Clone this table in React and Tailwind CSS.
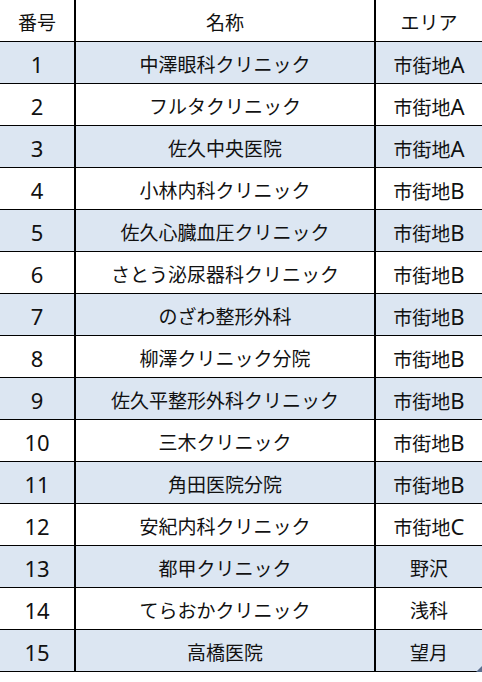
import React from 'react';

const rows = [
  ['1', '中澤眼科クリニック', '市街地A'],
  ['2', 'フルタクリニック', '市街地A'],
  ['3', '佐久中央医院', '市街地A'],
  ['4', '小林内科クリニック', '市街地B'],
  ['5', '佐久心臓血圧クリニック', '市街地B'],
  ['6', 'さとう泌尿器科クリニック', '市街地B'],
  ['7', 'のざわ整形外科', '市街地B'],
  ['8', '柳澤クリニック分院', '市街地B'],
  ['9', '佐久平整形外科クリニック', '市街地B'],
  ['10', '三木クリニック', '市街地B'],
  ['11', '角田医院分院', '市街地B'],
  ['12', '安紀内科クリニック', '市街地C'],
  ['13', '都甲クリニック', '野沢'],
  ['14', 'てらおかクリニック', '浅科'],
  ['15', '高橋医院', '望月'],
];

// Latin letters and digits are drawn larger than the kana/kanji, as in the sheet
function Text({ value }) {
  const parts = value.match(/[A-Za-z0-9]+|[^A-Za-z0-9]+/g) || [];
  return (
    <span>
      {parts.map((p, i) =>
        /[A-Za-z0-9]/.test(p) ? (
          <span key={i} className="font-['Noto_Sans',sans-serif] text-[22px]">
            {p}
          </span>
        ) : (
          <span key={i}>{p}</span>
        )
      )}
    </span>
  );
}

function Row({ cells, shaded }) {
  return (
    <div
      className={
        'flex h-[42px] border-b border-black ' +
        (shaded ? 'bg-[#dce6f2]' : 'bg-white')
      }
    >
      <div className="flex w-[76px] items-center justify-center border-r-2 border-black pt-[2px]">
        <Text value={cells[0]} />
      </div>
      <div className="flex w-[300px] items-center justify-center border-r-2 border-black pt-[2px]">
        <Text value={cells[1]} />
      </div>
      <div className="flex flex-1 items-center justify-center pt-[2px]">
        <Text value={cells[2]} />
      </div>
    </div>
  );
}

export default function App() {
  return (
    <div className="relative h-[682px] w-[482px] bg-white font-['Noto_Sans_CJK_JP','Noto_Sans',sans-serif] text-[19px] leading-none text-[#111]">
      <Row cells={['番号', '名称', 'エリア']} shaded={false} />
      {rows.map((r, i) => (
        <Row key={r[0]} cells={r} shaded={i % 2 === 0} />
      ))}
      {/* resize handle */}
      <svg className="absolute left-[476px] top-[666px]" width="6" height="6" viewBox="0 0 6 6">
        <polygon points="6,0 6,6 0,6" fill="#5a6f8f" />
      </svg>
    </div>
  );
}
